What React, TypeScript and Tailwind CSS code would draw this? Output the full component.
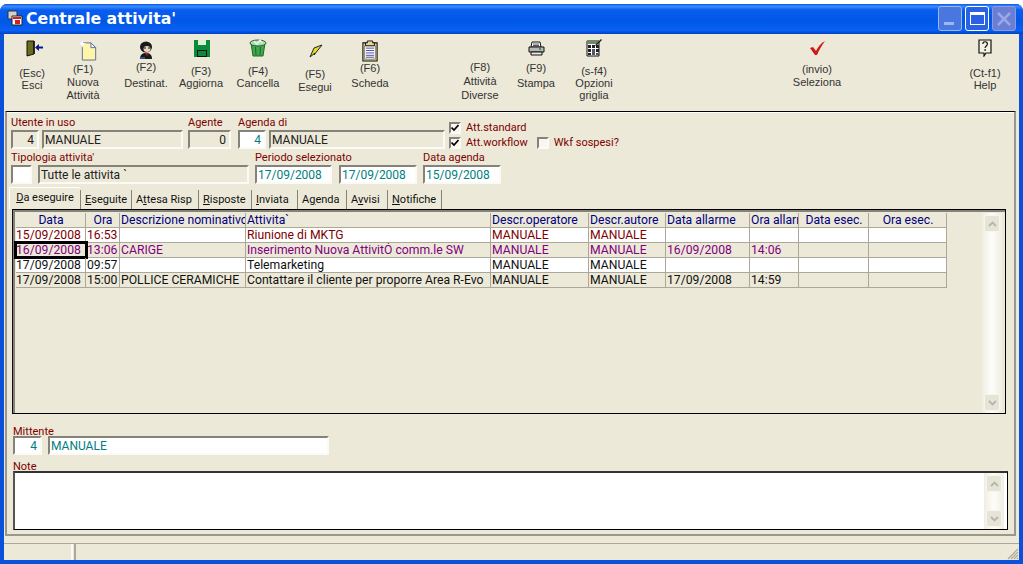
import React from 'react';

const uiFont = 'font-["Roboto","Noto_Sans",sans-serif]';

// --- Toolbar icons ---

const DoorIcon = () => (
  <svg width="18" height="17" viewBox="0 0 18 17">
    <path d="M1 1h7v13l-7 2z" fill="#6b6b1e" stroke="#111" strokeWidth="1" />
    <path d="M8 1v13" stroke="#111" strokeWidth="1.400" />
    <path d="M10 6.500h3V4l-4 3.500 4 3.500V8.500h4v-2z" fill="#0a1a8c" />
  </svg>
);

const NewDocIcon = () => (
  <svg width="20" height="21" viewBox="0 0 20 22">
    <path d="M3 3h9l5 5v13H3z" fill="#fdf6a8" stroke="#5a6a9a" strokeWidth="1" />
    <path d="M12 3v5h5z" fill="#fff" stroke="#5a6a9a" strokeWidth="1" />
    <path d="M3 0l1 3 3 1-3 1-1 3-1-3-2-1 2-1z" fill="#fff" />
  </svg>
);

const PersonIcon = () => (
  <svg width="16" height="20" viewBox="0 0 16 20">
    <ellipse cx="8" cy="6" rx="6" ry="5.500" fill="#1a1a1a" />
    <ellipse cx="9" cy="8" rx="3.500" ry="3" fill="#e8d8c0" />
    <path d="M6 7h2M10 7h2" stroke="#111" strokeWidth="1" />
    <path d="M2 18c0-5 3-6 6-6s6 1 6 6z" fill="#1a1a1a" />
    <path d="M7 12l2 3 2-3z" fill="#b02020" />
    <path d="M2 16h5v2H2z" fill="#30508c" />
  </svg>
);

const FloppyIcon = () => (
  <svg width="16" height="17" viewBox="0 0 16 17">
    <path d="M0 0h16v17H0z" fill="#0c8a3c" />
    <path d="M4 0h8v5H4z" fill="#d8f0d8" />
    <path d="M3 10h10v7H3z" fill="#111" />
    <path d="M4 11h8v5H4z" fill="#0c8a3c" />
  </svg>
);

const TrashIcon = () => (
  <svg width="18" height="18" viewBox="0 0 18 18">
    <path d="M2 4l2 13h10l2-13z" fill="#3fa84a" stroke="#1c6a28" strokeWidth="1" />
    <ellipse cx="9" cy="4" rx="8" ry="3" fill="#b8d8b8" stroke="#1c6a28" strokeWidth="1" />
    <path d="M5 2l3 3 3-4 2 3" stroke="#e8f4e8" strokeWidth="1.500" fill="none" />
    <path d="M6.500 8l.5 8M11.500 8l-.5 8" stroke="#1c6a28" strokeWidth="1" />
  </svg>
);

const BoltIcon = () => (
  <svg width="14" height="14" viewBox="0 0 14 14">
    <path d="M13 1L5 4 1 13l5-4-1 2z" fill="#e8dc30" stroke="#222" strokeWidth="1" strokeLinejoin="round" />
  </svg>
);

const ClipboardIcon = () => (
  <svg width="16" height="22" viewBox="0 0 18 23" preserveAspectRatio="none">
    <path d="M1 3h16v19H1z" fill="#e6d890" stroke="#111" strokeWidth="1.200" />
    <path d="M3 6h12v14H3z" fill="#fff" stroke="#333" strokeWidth="0.600" />
    <path d="M6 3V1h6v2h2v3H4V3z" fill="#e6d890" stroke="#111" strokeWidth="1" />
    <path d="M4.500 8.500h9M4.500 11h9M4.500 13.500h9M4.500 16h9M4.500 18h9" stroke="#4040a0" strokeWidth="1" />
  </svg>
);

const PrinterIcon = () => (
  <svg width="17" height="15" viewBox="0 0 17 15">
    <path d="M4 1h8l1 5H3z" fill="#fff" stroke="#111" strokeWidth="1" />
    <path d="M5 3h6M5 4.500h6" stroke="#333" strokeWidth="0.800" />
    <path d="M1 6h15v5H1z" fill="#b8b8b8" stroke="#111" strokeWidth="1" />
    <path d="M3 11h11v3H3z" fill="#e8e8e8" stroke="#111" strokeWidth="1" />
    <path d="M11 8h2" stroke="#2a8a2a" strokeWidth="1.500" />
  </svg>
);

const GridEditIcon = () => (
  <svg width="16" height="18" viewBox="0 0 16 18">
    <path d="M1 2h12v15H1z" fill="#fff" stroke="#111" strokeWidth="1" />
    <path d="M1 2h12v3H1z" fill="#6a8a6a" />
    <path d="M2 6h3v3H2zM2 10h3v3H2zM2 14h3v2H2zM6 6h3v3H6zM10 6h3v3h-3zM10 10h3v3h-3z" fill="#222" />
    <path d="M6 10h3v6H6zM10 14h3v2h-3z" fill="#556" />
    <path d="M15 0l1 1-5 5-2 1 1-2z" fill="#222" />
  </svg>
);

const CheckIcon = () => (
  <svg width="17" height="16" viewBox="0 0 17 16">
    <path d="M1 8l3-1 3 4c2-4 5-8 9-10-3 4-6 9-8 14H6z" fill="#d01818" />
  </svg>
);

const HelpIcon = () => (
  <svg width="14" height="18" viewBox="0 0 14 18">
    <path d="M1 1h12v13H8l-2 3v-3H1z" fill="#f4f2e0" stroke="#111" strokeWidth="1.200" />
    <path d="M4.800 5c0-3 4.600-3 4.600 0 0 2-2.300 2-2.300 4M7.100 10v2" fill="none" stroke="#111" strokeWidth="1.200" />
  </svg>
);

// --- Toolbar ---

const tools = [
  { lines: ['(Esc)', 'Esci'], icon: <DoorIcon />, ic: 'pl-[6px]', ml: 'ml-[3px]', mt: 'mt-[9px]', gap: 'gap-0' },
  { lines: ['(F1)', 'Nuova', 'Attività'], icon: <NewDocIcon />, ic: 'pl-[12px] pt-[4px]', ml: 'ml-[1px]', mt: 'mt-[5px]', gap: 'gap-[1px]' },
  { lines: ['(F2)', 'Destinat.'], icon: <PersonIcon />, ic: 'pt-[6px]', ml: 'ml-[13px]', mt: 'mt-[3px]', gap: 'gap-[4px]' },
  { lines: ['(F3)', 'Aggiorna'], icon: <FloppyIcon />, ic: 'pl-[2px]', ml: 'ml-[5px]', mt: 'mt-[7px]', gap: 'gap-0' },
  { lines: ['(F4)', 'Cancella'], icon: <TrashIcon />, ic: '', ml: 'ml-[7px]', mt: 'mt-[7px]', gap: 'gap-0' },
  { lines: ['(F5)', 'Esegui'], icon: <BoltIcon />, ic: 'pl-[2px] pt-[6px]', ml: 'ml-[7px]', mt: 'mt-[10px]', gap: 'gap-[1px]' },
  { lines: ['(F6)', 'Scheda'], icon: <ClipboardIcon />, ic: 'pt-[6px]', ml: 'ml-[5px]', mt: 'mt-[4px]', gap: 'gap-[3px]' },
  { lines: ['(F8)', 'Attività', 'Diverse'], icon: null, ic: '', ml: 'ml-[60px]', mt: 'mt-[3px]', gap: 'gap-[2px]' },
  { lines: ['(F9)', 'Stampa'], icon: <PrinterIcon />, ic: '', ml: 'ml-[6px]', mt: 'mt-[4px]', gap: 'gap-[3px]' },
  { lines: ['(s-f4)', 'Opzioni', 'griglia'], icon: <GridEditIcon />, ic: '', ml: 'ml-[8px]', mt: 'mt-[7px]', gap: 'gap-0' },
  { lines: ['(invio)', 'Seleziona'], icon: <CheckIcon />, ic: '', ml: 'ml-[173px]', mt: 'mt-[5px]', gap: 'gap-[1px]' },
  { lines: ['(Ct-f1)', 'Help'], icon: <HelpIcon />, ic: '', ml: 'ml-[118px]', mt: 'mt-[9px]', gap: 'gap-0' },
];

const Toolbar = () => (
  <div className='flex h-[74px] pt-[4px] font-["Liberation_Sans",sans-serif] text-[11px] leading-[12px] text-[#333]'>
    {tools.map(t => (
      <div key={t.lines[0]} className={`flex w-[50px] shrink-0 flex-col items-center ${t.ml}`}>
        <div className={`flex h-[20px] items-center justify-center ${t.ic}`}>{t.icon}</div>
        <div className={`flex flex-col items-center whitespace-nowrap ${t.mt} ${t.gap}`}>
          {t.lines.map(l => <div key={l}>{l}</div>)}
        </div>
      </div>
    ))}
  </div>
);

// --- Form bits ---

const Label = ({ children }: { children: React.ReactNode }) => (
  <div className="h-[15px] whitespace-nowrap text-[11px] leading-[16px] text-[#800000]">{children}</div>
);

const Field = ({ width, value, white, right, teal }: { width: string; value?: string; white?: boolean; right?: boolean; teal?: boolean }) => (
  <div
    className={`flex h-[19px] shrink-0 items-center overflow-hidden border-2 border-t-[#85827a] border-l-[#85827a] border-r-[#fbfaf5] border-b-[#fbfaf5] px-[1px] text-[12px] ${width} ${white ? 'bg-white' : 'bg-[#ece9d8]'} ${right ? 'justify-end pr-[3px]' : ''} ${teal ? 'text-[#008080]' : 'text-[#222]'}`}
  >
    {value}
  </div>
);

const Checkbox = ({ checked }: { checked?: boolean }) => (
  <div className="flex h-[12px] w-[12px] shrink-0 items-center justify-center border-2 border-t-[#85827a] border-l-[#85827a] border-r-[#fbfaf5] border-b-[#fbfaf5] bg-[#f7f6ef]">
    {checked && (
      <svg width="8" height="8" viewBox="0 0 8 8">
        <path d="M0.500 3.500l2.500 2.500 4.500-5" fill="none" stroke="#000" strokeWidth="1.700" />
      </svg>
    )}
  </div>
);

const tabs = [
  { key: 'Eseguite', w: 'w-[51px]', node: <><u>E</u>seguite</> },
  { key: 'Attesa', w: 'w-[67px]', node: <>A<u>t</u>tesa Risp</> },
  { key: 'Risposte', w: 'w-[53px]', node: <><u>R</u>isposte</> },
  { key: 'Inviata', w: 'w-[46px]', node: <><u>I</u>nviata</> },
  { key: 'Agenda', w: 'w-[49px]', node: <>A<u>g</u>enda</> },
  { key: 'Avvisi', w: 'w-[41px]', node: <>A<u>v</u>visi</> },
  { key: 'Notifiche', w: 'w-[54px]', node: <><u>N</u>otifiche</> },
];

const TabStrip = () => (
  <div className="ml-[2px] mt-[3px] flex h-[22px] items-end text-[11px] text-[#111]">
    <div className="flex h-[22px] w-[71px] items-start justify-center rounded-t-[2px] border-l border-t border-white pt-[2px]">
      <span><u>D</u>a eseguire</span>
    </div>
    <div className="h-[19px] w-[1px] bg-[#85827a]" />
    {tabs.map(t => (
      <div key={t.key} className={`flex h-[19px] shrink-0 items-center whitespace-nowrap border-r border-[#85827a] pl-[4px] pt-[1px] ${t.w}`}>
        <span>{t.node}</span>
      </div>
    ))}
  </div>
);

// --- Grid ---

const columns = [
  { title: 'Data', w: 'w-[70px]', center: true },
  { title: 'Ora', w: 'w-[34px]', center: true },
  { title: 'Descrizione nominativo', w: 'w-[126px]' },
  { title: 'Attivita`', w: 'w-[245px]' },
  { title: 'Descr.operatore', w: 'w-[98px]' },
  { title: 'Descr.autore', w: 'w-[77px]' },
  { title: 'Data allarme', w: 'w-[84px]' },
  { title: 'Ora allarme', w: 'w-[49px]' },
  { title: 'Data esec.', w: 'w-[70px]', center: true },
  { title: 'Ora esec.', w: 'w-[78px]', center: true },
];

const rows = [
  { bg: 'bg-white', color: 'text-[#800000]', cells: ['15/09/2008', '16:53', '', 'Riunione di MKTG', 'MANUALE', 'MANUALE', '', '', '', ''] },
  { bg: 'bg-[#ece9d8]', color: 'text-[#800080]', selected: true, cells: ['16/09/2008', '13:06', 'CARIGE', 'Inserimento Nuova AttivitÓ comm.le SW', 'MANUALE', 'MANUALE', '16/09/2008', '14:06', '', ''] },
  { bg: 'bg-white', color: 'text-[#111]', cells: ['17/09/2008', '09:57', '', 'Telemarketing', 'MANUALE', 'MANUALE', '', '', '', ''] },
  { bg: 'bg-[#ece9d8]', color: 'text-[#111]', cells: ['17/09/2008', '15:00', 'POLLICE CERAMICHE', 'Contattare il cliente per proporre Area R-Evo', 'MANUALE', 'MANUALE', '17/09/2008', '14:59', '', ''] },
];

const ScrollButton = ({ up }: { up?: boolean }) => (
  <div className="flex h-[17px] w-[16px] items-center justify-center rounded-[2px] border border-[#f6f5ee] bg-[#e6e4d6]">
    <svg width="9" height="6" viewBox="0 0 9 6">
      <path d={up ? 'M1 5l3.500-3.500L8 5' : 'M1 1l3.500 3.500L8 1'} fill="none" stroke="#b8b6a8" strokeWidth="1.800" />
    </svg>
  </div>
);

const Scrollbar = () => (
  <div className="flex h-full w-[20px] flex-col items-center justify-between bg-[linear-gradient(90deg,#f0eee2,#fdfdfa_50%,#f0eee2)] py-[2px]">
    <ScrollButton up />
    <ScrollButton />
  </div>
);

const Grid = () => (
  <div className="ml-[5px] mr-[8px] flex h-[205px] border border-black border-l-[#111]">
    <div className="flex min-w-0 flex-1 border-l-2 border-t-2 border-[#85827a] pl-[1px] pt-[1px]">
      <div className="min-w-0 flex-1 text-[12.200px] leading-[15px]">
        <div className="flex h-[14px] text-[#000080]">
          {columns.map(c => (
            <div key={c.title} className={`shrink-0 overflow-hidden whitespace-nowrap border-r border-[#aca899] pl-[1px] ${c.w} ${c.center ? 'text-center' : ''}`}>
              {c.title}
            </div>
          ))}
        </div>
        {rows.map(r => (
          <div key={r.cells[0] + r.cells[1]} className={`flex h-[15px] w-[931px] border-t border-[#aca899] ${r.bg} ${r.color}`}>
            {r.cells.map((v, i) => (
              <div
                key={columns[i].title}
                className={`shrink-0 overflow-hidden whitespace-nowrap border-r border-[#aca899] ${i === 0 ? 'pl-0' : 'pl-[1px]'} ${columns[i].w} ${r.selected && i === 0 ? 'outline-[3px] -outline-offset-1 outline-black' : ''}`}
              >
                {v}
              </div>
            ))}
          </div>
        ))}
        <div className="h-[1px] w-[931px] bg-[#aca899]" />
      </div>
      <div className="mr-[3px]">
        <Scrollbar />
      </div>
    </div>
  </div>
);

// --- Window ---

const TitleBar = () => (
  <div className="flex h-[30px] shrink-0 items-start rounded-t-[7px] bg-[linear-gradient(180deg,#0a58e8_0%,#3a8cf8_8%,#0a5cf0_20%,#0058e6_60%,#0a60f2_88%,#0040c0_100%)] pl-[7px] pr-[7px] pt-[2px]">
    <svg width="16" height="16" viewBox="0 0 16 16" className="mt-[4px] shrink-0">
      <path d="M1 1h9v8H1z" fill="#d0d0d0" stroke="#333" strokeWidth="1" />
      <path d="M5 6h10v9H5z" fill="#fff" stroke="#222" strokeWidth="1" />
      <path d="M6 7h8v2H6z" fill="#d02020" />
      <path d="M8 10h5v4H8z" fill="#d02020" />
    </svg>
    <div className='ml-[3px] whitespace-nowrap font-["DejaVu_Sans",sans-serif] text-[15.700px] font-bold leading-[25px] text-white'>Centrale attivita'</div>
    <div className="ml-auto flex gap-[3px]">
      <div className="flex h-[25px] w-[24px] items-end rounded-[3px] border border-[#9ab8f0] bg-[#4a76e0] pb-[5px] pl-[5px]">
        <div className="h-[3px] w-[10px] bg-[#9ab8f0]" />
      </div>
      <div className="flex h-[25px] w-[24px] items-center justify-center rounded-[3px] border border-white bg-[#2a62e4]">
        <div className="h-[13px] w-[15px] border border-t-[3px] border-white" />
      </div>
      <div className="flex h-[25px] w-[24px] items-center justify-center rounded-[3px] border border-[#8a9adc] bg-[#6a7ed6]">
        <svg width="14" height="14" viewBox="0 0 14 14">
          <path d="M1 1l12 12M13 1L1 13" stroke="#9aa8e4" strokeWidth="2.500" />
        </svg>
      </div>
    </div>
  </div>
);

const StatusBar = () => (
  <div className="h-[24px] pt-[7px]">
    <div className="flex h-[17px] border-t border-[#aca899]">
      <div className="h-full w-[69px] border-r-2 border-[#fbfaf5]" />
      <div className="ml-[1px] flex h-full flex-1 items-end justify-end border-l-2 border-[#aca899]">
        <svg width="13" height="13" viewBox="0 0 13 13">
          <path d="M12 2L2 12M12 5l-7 7M12 8l-4 4M12 11l-1 1" stroke="#aca899" strokeWidth="1.200" />
        </svg>
      </div>
    </div>
  </div>
);

export default function App() {
  return (
    <div className={`h-[564px] w-[1023px] overflow-hidden bg-white pt-[4px] ${uiFont}`}>
      <div className="flex h-[560px] flex-col rounded-t-[7px] bg-[#0a50d8]">
        <TitleBar />
        <div className="mx-[4px] h-[526px] bg-[#ece9d8]">
          <Toolbar />
          <div className="ml-[1px] mr-[3px] mt-[3px] h-[425px] border-l-2 border-r-2 border-b-2 border-t border-l-[#9a978c] border-r-[#9a978c] border-b-[#9a978c] border-t-black">
            <div className="border-t border-white pl-[4px] pt-[2px]">
              <div className="flex">
                <div className="shrink-0">
                  <Label>Utente in uso</Label>
                  <div className="flex gap-[3px]">
                    <Field width="w-[28px]" value="4" right />
                    <Field width="w-[141px]" value="MANUALE" />
                  </div>
                </div>
                <div className="ml-[5px] shrink-0">
                  <Label>Agente</Label>
                  <Field width="w-[43px]" value="0" right />
                </div>
                <div className="ml-[7px] shrink-0">
                  <Label>Agenda di</Label>
                  <div className="flex gap-[3px]">
                    <Field width="w-[28px]" value="4" right white teal />
                    <Field width="w-[176px]" value="MANUALE" />
                  </div>
                </div>
                <div className="ml-[4px] flex flex-col gap-[3px] pt-[7px] text-[11px] leading-[12px] text-[#800000]">
                  <div className="flex items-center gap-[5px]">
                    <Checkbox checked />
                    <span>Att.standard</span>
                  </div>
                  <div className="flex items-center gap-[5px]">
                    <Checkbox checked />
                    <span>Att.workflow</span>
                    <div className="ml-[4px]"><Checkbox /></div>
                    <span>Wkf sospesi?</span>
                  </div>
                </div>
              </div>
              <div className="mt-[1px] flex">
                <div className="shrink-0">
                  <Label>Tipologia attivita'</Label>
                  <div className="flex gap-[6px]">
                    <Field width="w-[21px]" white />
                    <Field width="w-[211px]" value="Tutte le attivita `" />
                  </div>
                </div>
                <div className="ml-[6px] shrink-0">
                  <Label>Periodo selezionato</Label>
                  <div className="flex gap-[7px]">
                    <Field width="w-[77px]" value="17/09/2008" white teal />
                    <Field width="w-[78px]" value="17/09/2008" white teal />
                  </div>
                </div>
                <div className="ml-[6px] shrink-0">
                  <Label>Data agenda</Label>
                  <Field width="w-[78px]" value="15/09/2008" white teal />
                </div>
              </div>
            </div>
            <TabStrip />
            <Grid />
            <div className="ml-[6px] mt-[10px]">
              <div className="h-[12px] text-[11px] leading-[15px] text-[#800000]">Mittente</div>
              <div className="flex gap-[6px]">
                <Field width="w-[29px]" value="4" right white teal />
                <Field width="w-[281px]" value="MANUALE" white teal />
              </div>
              <div className="mt-[4px] h-[12px] text-[11px] leading-[15px] text-[#800000]">Note</div>
            </div>
            <div className="ml-[6px] mr-[6px] flex h-[59px] justify-end border border-black border-t-2 border-l-2 border-t-[#333] border-l-[#555] bg-white pr-[3px]">
              <Scrollbar />
            </div>
          </div>
          <StatusBar />
        </div>
      </div>
    </div>
  );
}
